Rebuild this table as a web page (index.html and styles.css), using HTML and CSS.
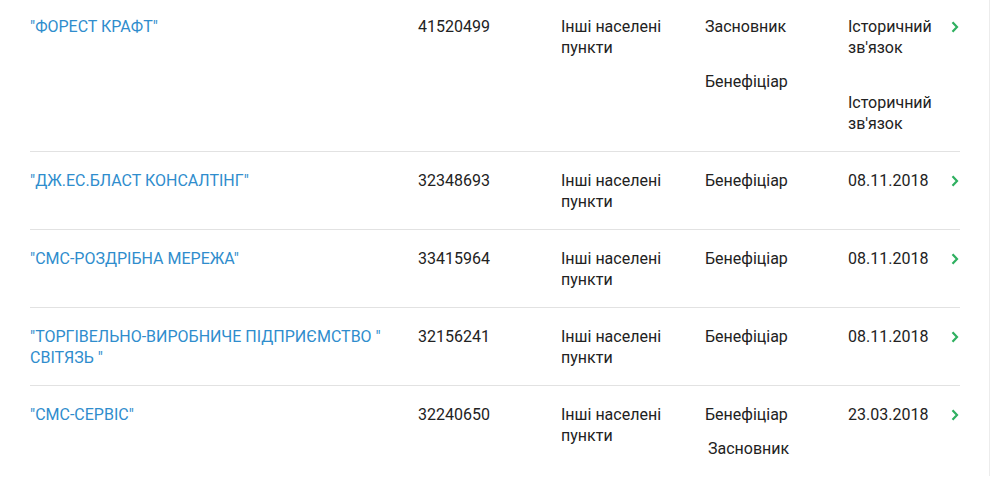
FILE: index.html
```html
<!DOCTYPE html>
<html lang="uk">
<head>
<meta charset="utf-8">
<link rel="stylesheet" href="styles.css">
</head>
<body>
<div class="page">
  <div class="list">
    <div class="row row-first">
      <a class="name" href="#">"ФОРЕСТ КРАФТ"</a>
      <div class="cell">41520499</div>
      <div class="cell">Інші населені пункти</div>
      <div class="cell stack">
        <div class="item">Засновник</div>
        <div class="item">Бенефіціар</div>
      </div>
      <div class="cell stack">
        <div class="item">Історичний зв'язок</div>
        <div class="item">Історичний зв'язок</div>
      </div>
      <span class="chev"><svg width="8" height="12" viewBox="0 0 8 12"><path d="M1.5 1.2 L6 6 L1.5 10.8" fill="none" stroke="#2fb060" stroke-width="2.2"/></svg></span>
    </div>
    <div class="row">
      <a class="name" href="#">"ДЖ.ЕС.БЛАСТ КОНСАЛТІНГ"</a>
      <div class="cell">32348693</div>
      <div class="cell">Інші населені пункти</div>
      <div class="cell">Бенефіціар</div>
      <div class="cell">08.11.2018</div>
      <span class="chev"><svg width="8" height="12" viewBox="0 0 8 12"><path d="M1.5 1.2 L6 6 L1.5 10.8" fill="none" stroke="#2fb060" stroke-width="2.2"/></svg></span>
    </div>
    <div class="row">
      <a class="name" href="#">"СМС-РОЗДРІБНА МЕРЕЖА"</a>
      <div class="cell">33415964</div>
      <div class="cell">Інші населені пункти</div>
      <div class="cell">Бенефіціар</div>
      <div class="cell">08.11.2018</div>
      <span class="chev"><svg width="8" height="12" viewBox="0 0 8 12"><path d="M1.5 1.2 L6 6 L1.5 10.8" fill="none" stroke="#2fb060" stroke-width="2.2"/></svg></span>
    </div>
    <div class="row">
      <a class="name" href="#">"ТОРГІВЕЛЬНО-ВИРОБНИЧЕ ПІДПРИЄМСТВО " СВІТЯЗЬ "</a>
      <div class="cell">32156241</div>
      <div class="cell">Інші населені пункти</div>
      <div class="cell">Бенефіціар</div>
      <div class="cell">08.11.2018</div>
      <span class="chev"><svg width="8" height="12" viewBox="0 0 8 12"><path d="M1.5 1.2 L6 6 L1.5 10.8" fill="none" stroke="#2fb060" stroke-width="2.2"/></svg></span>
    </div>
    <div class="row">
      <a class="name" href="#">"СМС-СЕРВІС"</a>
      <div class="cell">32240650</div>
      <div class="cell">Інші населені пункти</div>
      <div class="cell stack tight">
        <div class="item">Бенефіціар</div>
        <div class="item shifted">Засновник</div>
      </div>
      <div class="cell">23.03.2018</div>
      <span class="chev"><svg width="8" height="12" viewBox="0 0 8 12"><path d="M1.5 1.2 L6 6 L1.5 10.8" fill="none" stroke="#2fb060" stroke-width="2.2"/></svg></span>
    </div>
  </div>
</div>
</body>
</html>
```

FILE: styles.css
```css
html, body {
  margin: 0;
  padding: 0;
  background: #ffffff;
}

body {
  font-family: Roboto, "Liberation Sans", Arial, sans-serif;
  font-size: 16px;
  line-height: 21px;
  color: #222222;
}

.page {
  width: 990px;
  border-right: 1px solid #ececec;
  box-sizing: border-box;
}

.list {
  margin-left: 30px;
  width: 930px;
}

.row {
  display: grid;
  grid-template-columns: 388px 143px 144px 143px 102px 10px;
  align-items: start;
  padding: 18px 0 17px;
  border-top: 1px solid #e2e2e2;
}

.row-first {
  border-top: 0;
  padding-top: 16px;
}

.name {
  color: #2f8dcd;
  text-decoration: none;
  padding-right: 20px;
}

.cell {
  padding-right: 12px;
}

.stack {
  display: flex;
  flex-direction: column;
  gap: 34px;
}

.stack.tight {
  gap: 13px;
}

.shifted {
  margin-left: 3px;
}

.chev {
  display: flex;
  height: 21px;
  align-items: center;
  justify-content: center;
}

.chev svg {
  display: block;
}
```
